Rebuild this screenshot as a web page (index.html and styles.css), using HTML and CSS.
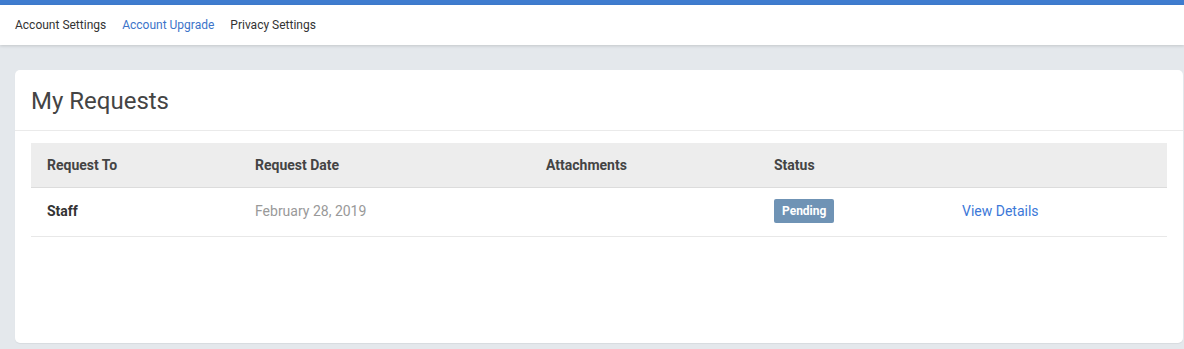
FILE: index.html
```html
<!DOCTYPE html>
<html lang="en">
<head>
  <meta charset="UTF-8">
  <title>My Requests</title>
  <link rel="stylesheet" href="styles.css">
</head>
<body>
  <div class="top-line"></div>
  <nav class="sub-nav">
    <a href="#">Account Settings</a>
    <a href="#" class="active">Account Upgrade</a>
    <a href="#">Privacy Settings</a>
  </nav>

  <div class="page">
    <div class="card">
      <h2 class="card-title">My Requests</h2>
      <div class="card-body">
        <table class="requests">
          <thead>
            <tr>
              <th class="col-to">Request To</th>
              <th class="col-date">Request Date</th>
              <th class="col-att">Attachments</th>
              <th class="col-status">Status</th>
              <th></th>
            </tr>
          </thead>
          <tbody>
            <tr>
              <td class="name">Staff</td>
              <td class="date">February 28, 2019</td>
              <td></td>
              <td><span class="badge">Pending</span></td>
              <td><a href="#" class="details">View Details</a></td>
            </tr>
          </tbody>
        </table>
      </div>
    </div>
  </div>
</body>
</html>
```

FILE: styles.css
```css
body {
  margin: 0;
  font-family: Roboto, "Liberation Sans", Arial, sans-serif;
  background-color: #e4e8ec;
  color: #333;
}
a {
  text-decoration: none;
}
.top-line {
  height: 5px;
  background-color: #3f7ccf;
}
.sub-nav {
  display: flex;
  gap: 16px;
  height: 40px;
  align-items: center;
  padding: 0 15px;
  background-color: #fff;
  box-shadow: 0 1px 3px rgba(0, 0, 0, 0.15);
  font-size: 12px;
}
.sub-nav a {
  color: #333;
}
.sub-nav a.active {
  color: #3c74c9;
}
.page {
  padding: 25px 1px 6px 15px;
}
.card {
  background-color: #fff;
  border-radius: 5px;
  height: 273px;
  box-shadow: 0 1px 1px rgba(0, 0, 0, 0.06);
}
.card-title {
  margin: 0;
  padding: 0 16px;
  height: 60px;
  line-height: 63px;
  font-size: 24px;
  font-weight: 400;
  color: #444;
  border-bottom: 1px solid #eaeaea;
}
.card-body {
  padding: 12px 16px;
}
.requests {
  width: 100%;
  border-collapse: collapse;
  font-size: 14px;
}
.requests th {
  text-align: left;
  font-weight: 700;
  color: #444;
  background-color: #ededed;
  height: 44px;
  padding: 0 16px;
  border-bottom: 1px solid #dcdcdc;
}
.requests td {
  height: 45px;
  padding: 0 16px 3px;
  border-bottom: 1px solid #e8e8e8;
}
.col-to { width: 176px; }
.col-date { width: 259px; }
.col-att { width: 196px; }
.col-status { width: 156px; }
.requests td.name {
  font-weight: 700;
}
.requests td.date {
  color: #999;
}
.badge {
  display: inline-block;
  padding: 5px 8px;
  font-size: 12px;
  font-weight: 700;
  color: #fff;
  background-color: #6f93b5;
  border-radius: 2px;
}
.details {
  color: #3c78d8;
}
```
